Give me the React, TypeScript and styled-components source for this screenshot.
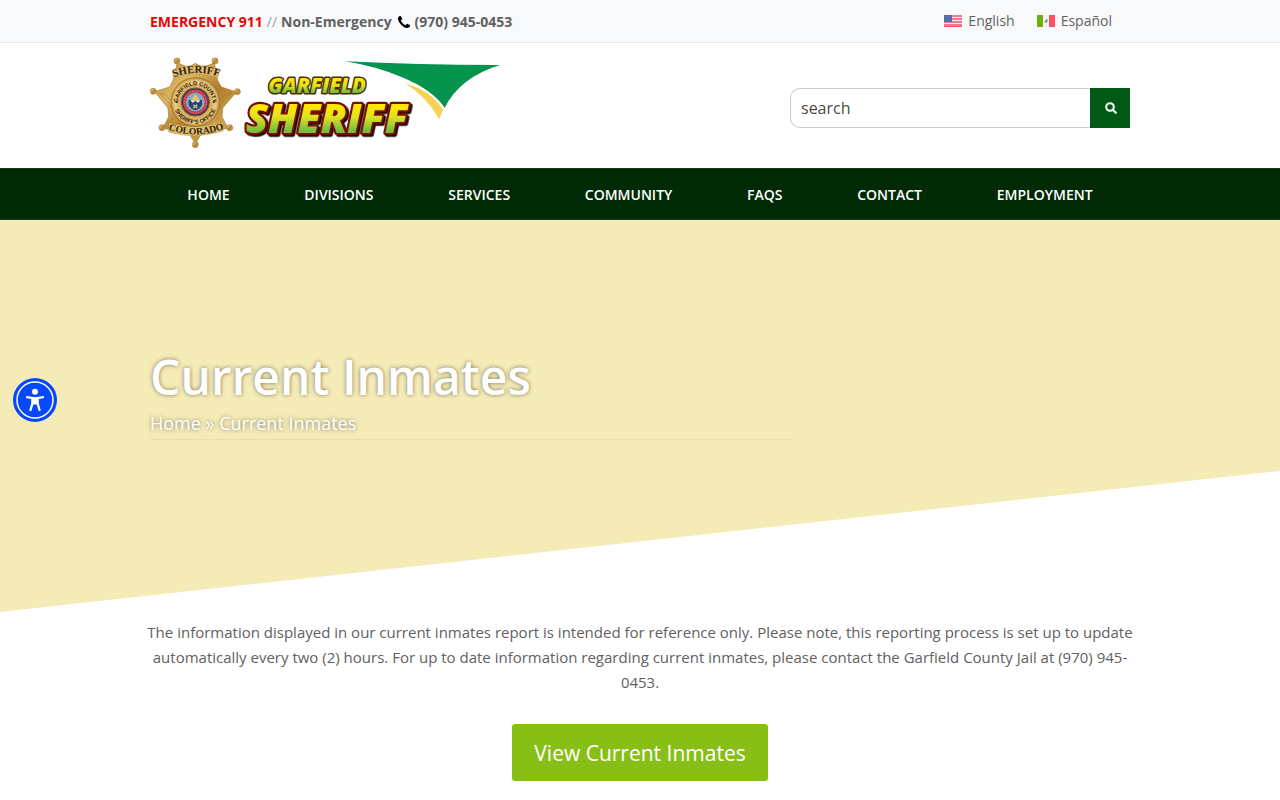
import React from 'react';
import styled, { createGlobalStyle } from 'styled-components';

const GlobalStyle = createGlobalStyle`
  * { box-sizing: border-box; }
  body {
    margin: 0;
    background: #fff;
    color: #616161;
    font-family: 'Open Sans', 'Noto Sans', sans-serif;
    font-size: 15px;
    line-height: 25px;
    overflow-x: hidden;
  }
  a { color: inherit; text-decoration: none; }
`;

const Container = styled.div`
  width: 100%;
  max-width: 980px;
  margin: 0 auto;
`;

const TopBar = styled.div`
  background: #f8f9fb;
  border-bottom: 1px solid #e4e7ea;
  font-size: 14px;
  line-height: 22px;
`;

const TopBarRow = styled(Container)`
  display: flex;
  justify-content: space-between;
  padding: 10px 0;
`;

const Contacts = styled.div`
  display: flex;
  align-items: center;
  gap: 4px;
  font-weight: 700;
  height: 24px;
  margin-bottom: -2px;
`;

const Emergency = styled.span`
  color: #e80505;
`;

const Divider = styled.span`
  color: #9aa0a6;
  font-weight: 400;
`;

const Phone = styled.a`
  display: flex;
  align-items: center;
  gap: 5px;
  padding-left: 2px;
`;

const Languages = styled.nav`
  display: flex;
  gap: 22px;
  padding-right: 18px;
`;

const Language = styled.a`
  display: flex;
  align-items: center;
  gap: 6px;
`;

const Masthead = styled(Container)`
  display: flex;
  align-items: center;
  justify-content: space-between;
  padding: 14px 0 20px;
`;

const LogoLink = styled.a`
  display: block;
  svg { display: block; }
`;

const SearchForm = styled.form`
  display: flex;
  width: 340px;
  height: 40px;
  margin-top: 10px;
`;

const SearchInput = styled.input`
  flex: 1;
  min-width: 0;
  padding: 2px 10px 0;
  border: 1px solid #ccc;
  border-right: 0;
  border-radius: 10px 0 0 10px;
  background: #fff;
  color: #4a4a4a;
  font: inherit;
  font-size: 16px;
  &::placeholder { color: #4a4a4a; opacity: 1; }
`;

const SearchButton = styled.button`
  display: flex;
  align-items: center;
  justify-content: center;
  width: 40px;
  padding: 1px 0 0 1px;
  border: 0;
  background: #005a16;
  color: #fff;
`;

const MainNav = styled.nav`
  background: #002905;
  border-top: 1px solid #0a4216;
  border-bottom: 1px solid #0a4216;
`;

const NavRow = styled(Container)`
  display: flex;
  justify-content: space-around;
`;

const NavLink = styled.a`
  color: #fff;
  font-size: 14px;
  font-weight: 600;
  line-height: 50px;
  padding-top: 1px;
  margin-bottom: -1px;
  text-transform: uppercase;
`;

const Hero = styled.section`
  padding: 126px 0 173px;
  background: #f5ebb6;
  clip-path: polygon(0 0, 100% 0, 100% 64%, 0 100%);
  color: #fff;
`;

const HeroTitle = styled.h1`
  margin: 0;
  font-size: 48px;
  font-weight: 600;
  line-height: 62px;
  text-shadow: 0 0 4px rgba(0, 0, 0, 0.5);
`;

const Breadcrumb = styled.nav`
  max-width: 643px;
  height: 31px;
  font-size: 18px;
  line-height: 30px;
  border-radius: 2px;
  box-shadow: 0 1px 1px rgba(0, 0, 0, 0.06);
  text-shadow: 0 0 4px rgba(0, 0, 0, 0.5);
`;

const Content = styled(Container)`
  display: flex;
  flex-direction: column;
  align-items: center;
  padding: 8px 0 20px;
  text-align: center;
`;

const Notice = styled.p`
  margin: 0 -5px 29px;
`;

const PrimaryLink = styled.a`
  padding: 1px 22px 0;
  border-radius: 3px;
  background: #87bf17;
  color: #fff;
  font-size: 21px;
  line-height: 56px;
`;

const AccessibilityButton = styled.button`
  position: fixed;
  top: 50%;
  left: 13px;
  width: 44px;
  height: 44px;
  margin-top: -22px;
  padding: 0;
  border: 0;
  border-radius: 50%;
  background: transparent;
  svg { display: block; }
`;

const Lettering = styled.g`
  filter: drop-shadow(5px 5px 0 #170500);
`;

const Logo = () => (
  <svg width="350" height="91" viewBox="30 21 1050 273" role="img" aria-label="Garfield Sheriff">
    <defs>
      <linearGradient id="gold" x1="0" y1="0" x2="1" y2="1">
        <stop offset="0" stopColor="#b98a3a" />
        <stop offset=".3" stopColor="#dcb65e" />
        <stop offset=".55" stopColor="#b07c2a" />
        <stop offset=".8" stopColor="#d3a850" />
        <stop offset="1" stopColor="#9a6c26" />
      </linearGradient>
      <radialGradient id="ring">
        <stop offset=".5" stopColor="#c99a45" />
        <stop offset=".85" stopColor="#e9cc82" />
        <stop offset="1" stopColor="#c08f3c" />
      </radialGradient>
      <linearGradient id="lettering" x1="0" y1="0" x2="0" y2="1">
        <stop offset=".3" stopColor="#ffe800" />
        <stop offset=".5" stopColor="#dfe320" />
        <stop offset=".75" stopColor="#74bd3e" />
      </linearGradient>
      <path id="arcTop" d="M101 82Q166 56 237 80" />
      <path id="arcBottom" d="M85 239Q166 268 252 237" />
      <path id="ringTop" d="M114 158A52 52 0 0 1 218 158" />
      <path id="ringBottom" d="M101 156A65 65 0 0 0 231 156" />
    </defs>
    <g fill="url(#gold)" stroke="#a27630" strokeWidth="2">
      <path d="M112 39L145 52L166 40L188 52L223 39L232 90L244 111L289 126L248 174L246 200L263 234L205 249L182 254L166 282L150 254L126 249L69 234L86 200L84 174L44 125L89 111L100 90Z" />
      <circle cx="111" cy="33" r="9" />
      <circle cx="225" cy="33" r="9" />
      <circle cx="40" cy="124" r="9" />
      <circle cx="292" cy="125" r="9" />
      <circle cx="66" cy="233" r="9" />
      <circle cx="269" cy="233" r="9" />
      <circle cx="166" cy="284" r="9" />
    </g>
    <g fill="none" stroke="#8b6222" strokeWidth="2" opacity=".6">
      <path d="M62 130Q82 130 88 150M55 128Q86 150 94 174M269 130Q250 130 244 150M276 128Q246 150 238 174M85 224Q96 200 103 206M246 224Q238 200 230 206" />
    </g>
    <path d="M97 60Q166 32 239 58L234 84Q166 58 100 86Z" fill="#dfbd6f" stroke="#b08a45" strokeWidth="1" />
    <path d="M88 218Q166 243 246 217L250 243Q166 270 85 246Z" fill="#dfbd6f" stroke="#b08a45" strokeWidth="1" />
    <circle cx="166" cy="156" r="73" fill="url(#ring)" stroke="#8d6528" strokeWidth="2" />
    <circle cx="166" cy="156" r="42" fill="#243c75" stroke="#7e5720" strokeWidth="3" />
    <circle cx="166" cy="156" r="33" fill="#8aa7c0" stroke="#c53547" strokeWidth="9" />
    <circle cx="166" cy="156" r="33" fill="none" stroke="#eaa2a0" strokeWidth="3" strokeDasharray="3 5" />
    <path d="M166 132L181 154H151Z" fill="#e1c565" />
    <path d="M146 150H186V164Q181 177 166 181Q151 177 146 164Z" fill="#26427b" />
    <path d="M151 151H181L175 158L166 153L157 158Z" fill="#f5f3e3" />
    <path d="M160 164L172 174M172 164L160 174" stroke="#e5c66b" strokeWidth="4" />
    <circle cx="110" cy="156" r="3" fill="#30220d" />
    <circle cx="222" cy="156" r="3" fill="#30220d" />
    <g fill="#30220d" fontFamily="Liberation Serif, serif" textAnchor="middle">
      <text fontSize="32" fontWeight="700"><textPath href="#arcTop" startOffset="50%">SHERIFF</textPath></text>
      <text fontSize="29" fontWeight="700"><textPath href="#arcBottom" startOffset="50%">COLORADO</textPath></text>
      <g fontFamily="Liberation Sans, sans-serif" fontSize="17" fontWeight="700">
        <text><textPath href="#ringTop" startOffset="50%">GARFIELD COUNTY</textPath></text>
        <text><textPath href="#ringBottom" startOffset="50%">SHERIFF'S OFFICE</textPath></text>
      </g>
    </g>
    <path d="M615 34Q830 45 1080 45Q960 82 914 173Q875 118 786 82Q710 49 615 34Z" fill="#06934d" />
    <path d="M797 101Q870 118 910 180L897 207Q860 140 797 101Z" fill="#f4d456" />
    <g fontFamily="Open Sans, sans-serif" fontWeight="800" fontStyle="italic" strokeLinejoin="round" fill="url(#lettering)" paintOrder="stroke">
      <text x="385" y="130" fontSize="62" stroke="#4a2c09" strokeWidth="9">GARFIELD</text>
      <Lettering>
        <text x="317" y="248" fontSize="123" stroke="#780d05" strokeWidth="13">SHERIFF</text>
      </Lettering>
    </g>
  </svg>
);

const PhoneIcon = () => (
  <svg width="12" height="12" viewBox="0 0 1408 1408" aria-hidden="true">
    <path d="M1408 1112q0 27-10 70.500t-21 68.500q-21 50-122 106-94 51-186 51-27 0-53-3.500t-57.500-12.500-47-14.500-55.500-20.500-49-18q-98-35-175-83-127-79-264-216t-216-264q-48-77-83-175-3-9-18-49t-20.500-55.500-14.500-47-12.500-57.500-3.500-53q0-92 51-186Q107 53 157 32q25-11 68.500-21T296 1q14 0 21 3 18 6 53 76 11 19 30 54t35 63.500 31 53.500q3 4 17.500 25t21.500 35.500 7 28.500q0 20-28.500 50t-62 55-62 53-28.500 46q0 9 5 22.500t8.500 20.500 14 24 11.500 19q76 137 174 235t235 174q2 1 19 11.500t24 14 20.500 8.500 22.500 5q18 0 46-28.500t53-62 55-62 50-28.500q14 0 28.500 7t35.500 21.500 25 17.500q25 15 53.500 31t63.500 35 54 30q70 35 76 53 3 7 3 21z" fill="#000" />
  </svg>
);

const UsFlag = () => (
  <svg width="18" height="12" viewBox="0 0 18 12" aria-hidden="true">
    <path d="M0 0h18v12H0z" fill="#f6e9ee" />
    <path d="M0 1h18M0 4h18M0 7h18M0 10h18" stroke="#f0566a" strokeWidth="1.600" />
    <path d="M0 11.500h18" stroke="#f0566a" />
    <path d="M0 0h8v7H0z" fill="#5966a9" />
    <path d="M1 1.500h6M1 3.500h6M1 5.500h6" stroke="#6f79b5" strokeDasharray="1 1" />
  </svg>
);

const MexicoFlag = () => (
  <svg width="18" height="12" viewBox="0 0 18 12" aria-hidden="true">
    <path d="M0 0h18v12H0z" fill="#f5f5f5" />
    <path d="M0 0h6v12H0z" fill="#70ad12" />
    <path d="M12 0h6v12h-6z" fill="#fa5263" />
    <path d="M7.500 7.500l.5-2L10 4l1 1.500L9.500 8z" fill="#8b9a63" />
  </svg>
);

const SearchIcon = () => (
  <svg width="12" height="12" viewBox="0 0 12 12" fill="none" stroke="currentColor" strokeWidth="2" aria-hidden="true">
    <circle cx="5" cy="5" r="3.800" />
    <path d="M7.800 7.800L10.800 10.800" strokeLinecap="round" strokeWidth="2.200" />
  </svg>
);

const AccessibilityIcon = () => (
  <svg width="44" height="44" viewBox="0 0 44 44" aria-hidden="true">
    <circle cx="22" cy="22" r="22" fill="#0648fb" />
    <circle cx="22" cy="22" r="18" fill="none" stroke="#fff" strokeWidth="1.500" />
    <circle cx="22" cy="13.800" r="3" fill="#fff" />
    <path d="M14 19.200L19.500 20.200V25L17.500 32M30 19.200L24.500 20.200V25L26.500 32" fill="none" stroke="#fff" strokeWidth="2.300" strokeLinecap="round" strokeLinejoin="round" />
    <path d="M18.500 19h7v7.500h-7z" fill="#fff" />
  </svg>
);

const NAV_ITEMS = ['Home', 'Divisions', 'Services', 'Community', 'FAQs', 'Contact', 'Employment'];

export default function App() {
  return (
    <>
      <GlobalStyle />
      <header>
        <TopBar>
          <TopBarRow>
            <Contacts>
              <Emergency>EMERGENCY 911</Emergency>
              <Divider>//</Divider>
              <span>Non-Emergency</span>
              <Phone href="tel:9709450453"><PhoneIcon />(970) 945-0453</Phone>
            </Contacts>
            <Languages aria-label="Language">
              <Language href="#en"><UsFlag />English</Language>
              <Language href="#es" lang="es"><MexicoFlag />Español</Language>
            </Languages>
          </TopBarRow>
        </TopBar>
        <Masthead>
          <LogoLink href="#home"><Logo /></LogoLink>
          <SearchForm role="search">
            <SearchInput type="search" placeholder="search" aria-label="Search" />
            <SearchButton type="submit" aria-label="Submit search"><SearchIcon /></SearchButton>
          </SearchForm>
        </Masthead>
        <MainNav aria-label="Main">
          <NavRow>
            {NAV_ITEMS.map((item) => (
              <NavLink key={item} href={`#${item.toLowerCase()}`}>{item}</NavLink>
            ))}
          </NavRow>
        </MainNav>
      </header>
      <main>
        <Hero>
          <Container>
            <HeroTitle>Current Inmates</HeroTitle>
            <Breadcrumb aria-label="Breadcrumb"><a href="#home">Home</a> » Current Inmates</Breadcrumb>
          </Container>
        </Hero>
        <Content>
          <Notice>
            The information displayed in our current inmates report is intended for reference only. Please note, this
            reporting process is set up to update automatically every two (2) hours. For up to date information
            regarding current inmates, please contact the Garfield County Jail at (970) 945-0453.
          </Notice>
          <PrimaryLink href="#report">View Current Inmates</PrimaryLink>
        </Content>
      </main>
      <AccessibilityButton type="button" aria-label="Accessibility menu"><AccessibilityIcon /></AccessibilityButton>
    </>
  );
}
